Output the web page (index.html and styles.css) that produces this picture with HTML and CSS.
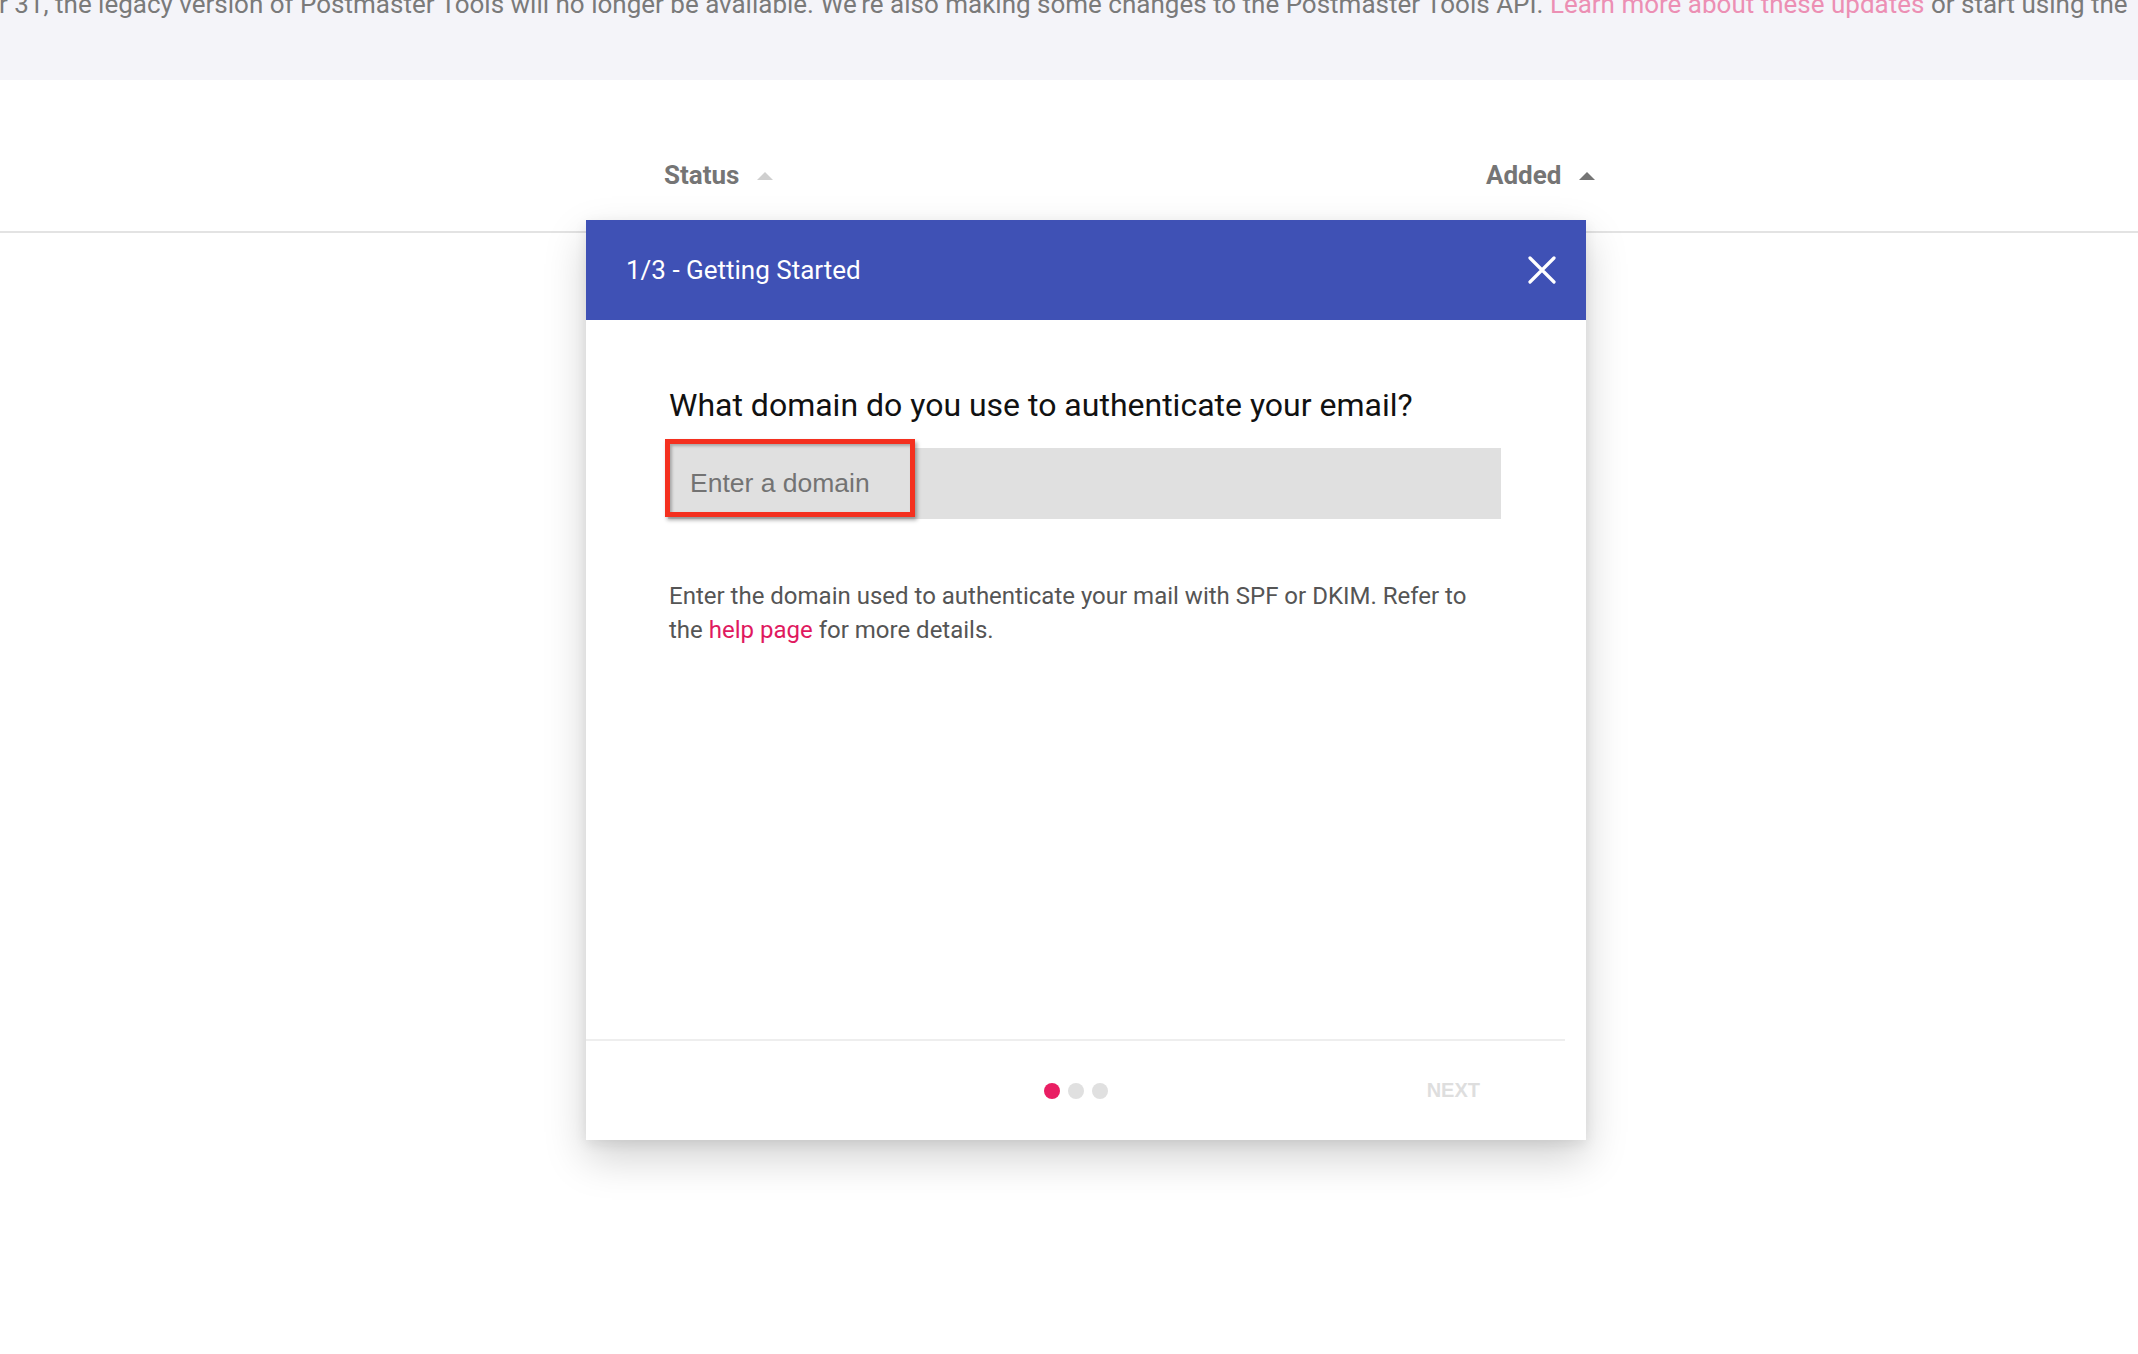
FILE: index.html
```html
<!DOCTYPE html>
<html>
<head>
<meta charset="utf-8">
<link rel="stylesheet" href="styles.css">
</head>
<body>
<div class="banner">
  <div class="banner-text">r 31, the legacy version of Postmaster Tools will no longer be available. We're also making some changes to the Postmaster Tools API. <a class="banner-link">Learn more about these updates</a> or start using the</div>
</div>
<div class="table-head">
  <div class="th th-status">Status <svg class="sort" width="16" height="8" viewBox="0 0 16 8"><polygon points="0,8 8,0 16,8" fill="#cfcfcf"/></svg></div>
  <div class="th th-added">Added <svg class="sort" width="16" height="8" viewBox="0 0 16 8"><polygon points="0,8 8,0 16,8" fill="#757575"/></svg></div>
</div>

<div class="modal">
  <div class="modal-head">
    <div class="modal-title">1/3 - Getting Started</div>
    <svg class="close" width="28" height="28" viewBox="0 0 28 28"><path d="M2 2 L26 26 M26 2 L2 26" stroke="#fff" stroke-width="3.2" stroke-linecap="round"/></svg>
  </div>
  <div class="modal-body">
    <div class="question">What domain do you use to authenticate your email?</div>
    <div class="field-wrap">
      <div class="field"><span class="placeholder">Enter a domain</span></div>
      <div class="annot"></div>
    </div>
    <p class="help">Enter the domain used to authenticate your mail with SPF or DKIM. Refer to the <a class="help-link">help page</a> for more details.</p>
  </div>
  <div class="modal-foot">
    <div></div>
    <div class="dots"><span class="dot active"></span><span class="dot"></span><span class="dot"></span></div>
    <div class="next">NEXT</div>
  </div>
</div>
</body>
</html>
```

FILE: styles.css
```css
html, body {
  margin: 0;
  padding: 0;
  background: #ffffff;
  font-family: Roboto, "Liberation Sans", Arial, sans-serif;
}
body {
  width: 2138px;
  height: 1354px;
  position: relative;
  overflow: hidden;
}
.banner {
  height: 80px;
  background: #f4f4f9;
  overflow: hidden;
  white-space: nowrap;
}
.banner-text {
  margin-top: -9px;
  margin-left: -1px;
  font-size: 26px;
  line-height: 26px;
  color: #7a7a7a;
}
.banner-link {
  color: #ec8fb4;
}
.table-head {
  height: 151px;
  border-bottom: 2px solid #e3e3e3;
  display: flex;
  align-items: flex-start;
  padding-left: 664px;
}
.th {
  margin-top: 79px;
  font-size: 26px;
  font-weight: 700;
  line-height: 32px;
  color: #757575;
  display: flex;
  align-items: center;
  gap: 18px;
}
.th-status {
  width: 822px;
}
.sort {
  display: block;
  margin-top: 2px;
}
.modal {
  position: absolute;
  left: 586px;
  top: 220px;
  width: 1000px;
  height: 920px;
  background: #fff;
  box-shadow: 0 18px 40px rgba(0,0,0,0.18), 0 4px 12px rgba(0,0,0,0.08);
  display: flex;
  flex-direction: column;
}
.modal-head {
  height: 100px;
  background: #3f51b5;
  display: flex;
  align-items: center;
  justify-content: space-between;
  padding: 0 30px 0 40px;
  flex-shrink: 0;
}
.modal-title {
  color: #fff;
  font-size: 26px;
  font-weight: 400;
}
.close {
  display: block;
}
.modal-body {
  flex: 1;
  padding: 66px 85px 0 83px;
}
.question {
  font-size: 32px;
  line-height: 38px;
  color: #111111;
}
.field-wrap {
  position: relative;
  margin-top: 24px;
  margin-left: -1px;
}
.field {
  height: 71px;
  background: #e0e0e0;
  display: flex;
  align-items: center;
  padding-left: 22px;
}
.placeholder {
  position: relative;
  z-index: 2;
  font-family: "Liberation Sans", Arial, sans-serif;
  font-size: 26.5px;
  color: #737373;
  margin-top: -1px;
}
.annot {
  position: absolute;
  z-index: 1;
  left: -3px;
  top: -9px;
  width: 240px;
  height: 68px;
  border: 5px solid #f4301f;
  background: #e0e0e0;
  box-shadow: 2px 3px 4px rgba(0,0,0,0.35), inset 2px 2px 3px rgba(0,0,0,0.25);
}
.help {
  margin: 60px 0 0 0;
  font-size: 24px;
  line-height: 34px;
  color: #555555;
}
.help-link {
  color: #e0195f;
}
.modal-foot {
  height: 99px;
  margin-right: 21px;
  border-top: 2px solid #eeeeee;
  display: grid;
  grid-template-columns: 1fr auto 1fr;
  align-items: center;
  flex-shrink: 0;
}
.dots {
  display: flex;
  gap: 8px;
}
.dot {
  width: 16px;
  height: 16px;
  border-radius: 50%;
  background: #e0e0e0;
}
.dot.active {
  background: #e91e63;
}
.next {
  justify-self: end;
  margin-right: 85px;
  font-family: "Liberation Sans", Arial, sans-serif;
  font-weight: 700;
  font-size: 20px;
  color: #dedede;
}
```
